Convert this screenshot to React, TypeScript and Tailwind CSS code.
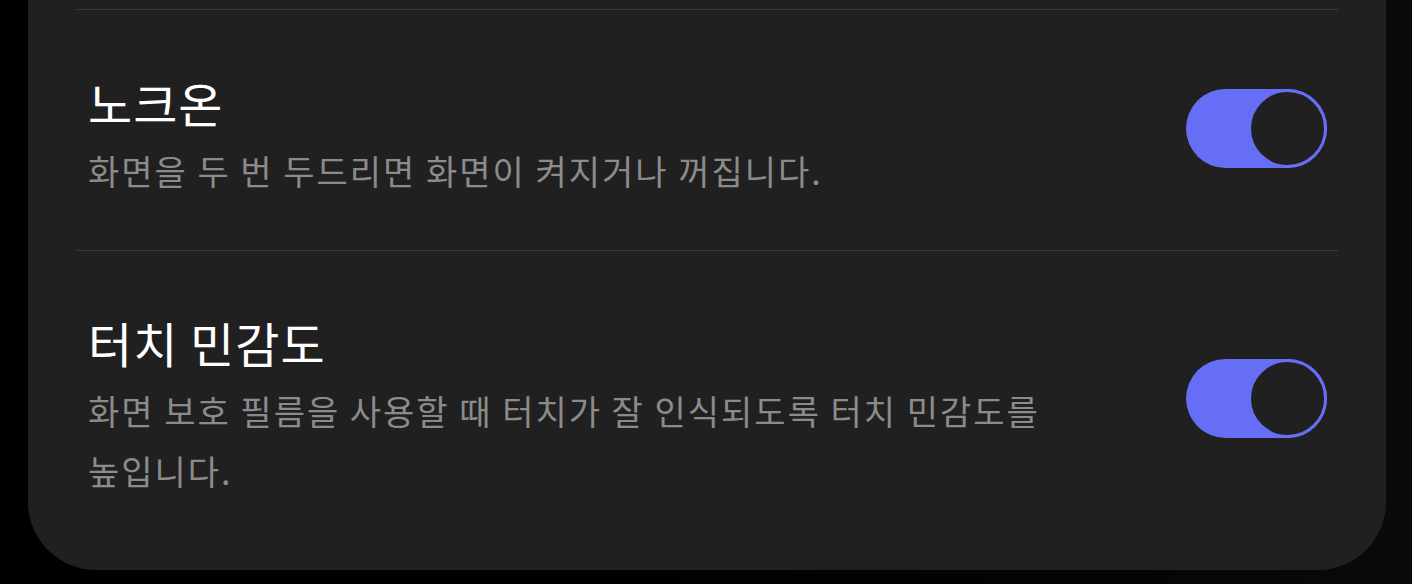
import * as React from "react"

const font = { fontFamily: '"Noto Sans CJK KR", "Noto Sans", sans-serif' }

function Toggle() {
  return (
    <div className="mb-[16px] flex h-[79px] w-[141px] shrink-0 items-center justify-end rounded-full bg-[#666ef6]">
      <div className="h-[79px] w-[79px] rounded-full border-[3px] border-[#666ef6] bg-[#202020]" />
    </div>
  )
}

function SettingRow({ title, desc, className }: { title: string; desc: string; className: string }) {
  return (
    <div className={"flex items-center justify-between pl-3 pr-[11px] " + className}>
      <div className="flex max-w-[990px] flex-col">
        <div className="text-[48px] leading-[60px] tracking-[1px] text-white">{title}</div>
        <div className="mt-[9px] break-keep text-[34px] leading-[60px] tracking-[2px] text-[#8b8b8b]">
          {desc}
        </div>
      </div>
      <Toggle />
    </div>
  )
}

export default function App() {
  return (
    <div className="h-[584px] w-[1412px] bg-gradient-to-r from-black to-[#0a0a0a]" style={font}>
      <div className="ml-[28px] h-[570px] w-[1358px] rounded-b-[68px] bg-[#202020] px-[48px] pt-[9px]">
        <div className="border-t border-[#3a3a3a]" />
        <SettingRow
          className="h-[240px] pt-[13px]"
          title="노크온"
          desc="화면을 두 번 두드리면 화면이 켜지거나 꺼집니다."
        />
        <div className="border-t border-[#3a3a3a]" />
        <SettingRow
          className="pt-[61px]"
          title="터치 민감도"
          desc="화면 보호 필름을 사용할 때 터치가 잘 인식되도록 터치 민감도를 높입니다."
        />
      </div>
    </div>
  )
}
